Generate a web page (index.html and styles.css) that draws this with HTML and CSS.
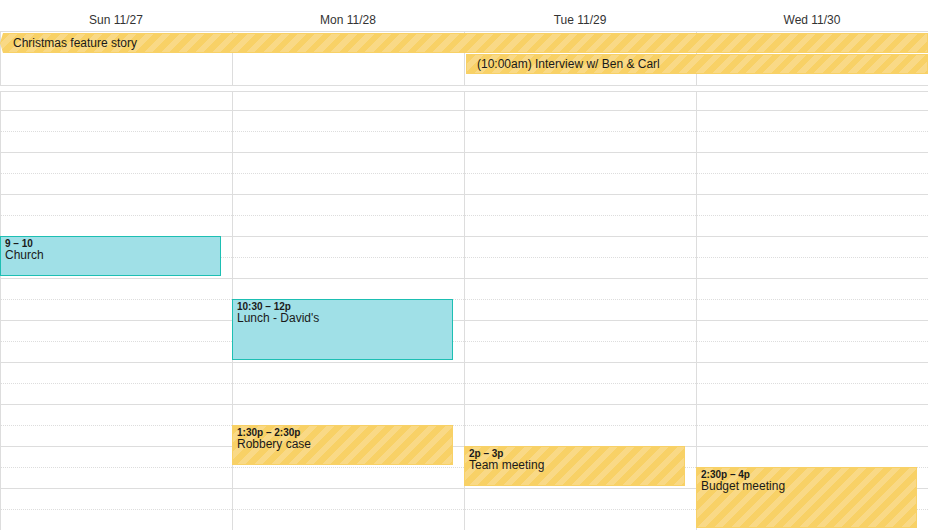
FILE: index.html
```html
<!DOCTYPE html>
<html lang="en">

<head>
    <meta charset="UTF-8">
    <meta name="viewport" content="width=device-width, initial-scale=1.0">
    <title>Week</title>
    <link rel="stylesheet" href="styles.css">
</head>

<body>
    <div class="calendar">
        <div class="day-header">
            <div class="day-name">Sun 11/27</div>
            <div class="day-name">Mon 11/28</div>
            <div class="day-name">Tue 11/29</div>
            <div class="day-name">Wed 11/30</div>
        </div>

        <!-- all day row -->
        <div class="allday">
            <div class="allday-cell"></div>
            <div class="allday-cell"></div>
            <div class="allday-cell"></div>
            <div class="allday-cell"></div>
            <div class="allday-event christmas">Christmas feature story</div>
            <div class="allday-event interview">(10:00am) Interview w/ Ben &amp; Carl</div>
        </div>

        <div class="divider"></div>

        <div class="timegrid">
            <div class="slots">
                <div class="slot first"></div>
                <div class="slot half"></div><div class="slot"></div>
                <div class="slot half"></div><div class="slot"></div>
                <div class="slot half"></div><div class="slot"></div>
                <div class="slot half"></div><div class="slot"></div>
                <div class="slot half"></div><div class="slot"></div>
                <div class="slot half"></div><div class="slot"></div>
                <div class="slot half"></div><div class="slot"></div>
                <div class="slot half"></div><div class="slot"></div>
                <div class="slot half"></div><div class="slot"></div>
                <div class="slot half"></div><div class="slot"></div>
            </div>

            <div class="columns">
                <div class="col">
                    <div class="event blue" style="top: 144px; height: 40px;">
                        <div class="time">9 – 10</div>
                        <div class="title">Church</div>
                    </div>
                </div>
                <div class="col">
                    <div class="event blue" style="top: 207px; height: 61px;">
                        <div class="time">10:30 – 12p</div>
                        <div class="title">Lunch - David's</div>
                    </div>
                    <div class="event yellow" style="top: 333px; height: 40px;">
                        <div class="time">1:30p – 2:30p</div>
                        <div class="title">Robbery case</div>
                    </div>
                </div>
                <div class="col">
                    <div class="event yellow" style="top: 354px; height: 40px;">
                        <div class="time">2p – 3p</div>
                        <div class="title">Team meeting</div>
                    </div>
                </div>
                <div class="col">
                    <div class="event yellow" style="top: 375px; height: 61px;">
                        <div class="time">2:30p – 4p</div>
                        <div class="title">Budget meeting</div>
                    </div>
                </div>
            </div>
        </div>
    </div>
</body>

</html>
```

FILE: styles.css
```css
* {
    box-sizing: border-box;
}

body {
    margin: 0;
    background-color: #ffffff;
    font-family: "Liberation Sans", Arial, sans-serif;
    overflow: hidden;
}

.calendar {
    width: 928px;
}

/* header */
.day-header {
    display: grid;
    grid-template-columns: repeat(4, 1fr);
    height: 32px;
    border-bottom: 1px solid #dddddd;
}

.day-name {
    padding-top: 12px;
    font-size: 12px;
    line-height: 16px;
    text-align: center;
    color: #333333;
}

/* all day */
.allday {
    display: grid;
    grid-template-columns: repeat(4, 1fr);
    grid-template-rows: 1px 20px 1px 20px 1fr;
    height: 54px;
    border-bottom: 1px solid #dddddd;
}

.allday-cell {
    grid-row: 1 / -1;
    border-left: 1px solid #dddddd;
}

.allday-cell:nth-child(1) { grid-column: 1; }
.allday-cell:nth-child(2) { grid-column: 2; }
.allday-cell:nth-child(3) { grid-column: 3; }
.allday-cell:nth-child(4) { grid-column: 4; }

.allday-event {
    position: relative;
    font-size: 12px;
    line-height: 18px;
    color: #1a1a1a;
    white-space: nowrap;
    overflow: hidden;
    border: 1px solid #f8d166;
    background: repeating-linear-gradient(135deg, #f8d166 0 6px, #f9d986 6px 12px);
}

.christmas {
    grid-row: 2;
    grid-column: 1 / 5;
    padding-left: 12px;
    clip-path: polygon(3px 0, 100% 0, 100% 100%, 3px 100%, 0 50%);
}

.interview {
    grid-row: 4;
    grid-column: 3 / 5;
    margin-left: 2px;
    padding-left: 10px;
}

.divider {
    height: 6px;
    border-bottom: 1px solid #dddddd;
}

/* time grid */
.timegrid {
    position: relative;
    height: 438px;
    overflow: hidden;
}

.slot {
    height: 21px;
    border-bottom: 1px solid #dddddd;
}

.slot.first {
    height: 19px;
}

.slot.half {
    border-bottom: 1px dotted #dddddd;
}

.columns {
    position: absolute;
    top: 0;
    left: 0;
    right: 0;
    bottom: 0;
    display: grid;
    grid-template-columns: repeat(4, 1fr);
}

.col {
    position: relative;
    border-left: 1px solid #dddddd;
}

.event {
    position: absolute;
    left: -1px;
    width: 221px;
    padding: 1px 4px 0;
    color: #1a1a1a;
    overflow: hidden;
}

.event.blue {
    background-color: #a0e0e7;
    border: 1px solid #1dbfb3;
}

.event.yellow {
    border: 1px solid #f8d166;
    background: repeating-linear-gradient(135deg, #f8d166 0 6px, #f9d986 6px 12px);
}

.time {
    font-size: 10px;
    font-weight: bold;
    line-height: 11px;
}

.title {
    font-size: 12px;
    line-height: 13px;
}
```
